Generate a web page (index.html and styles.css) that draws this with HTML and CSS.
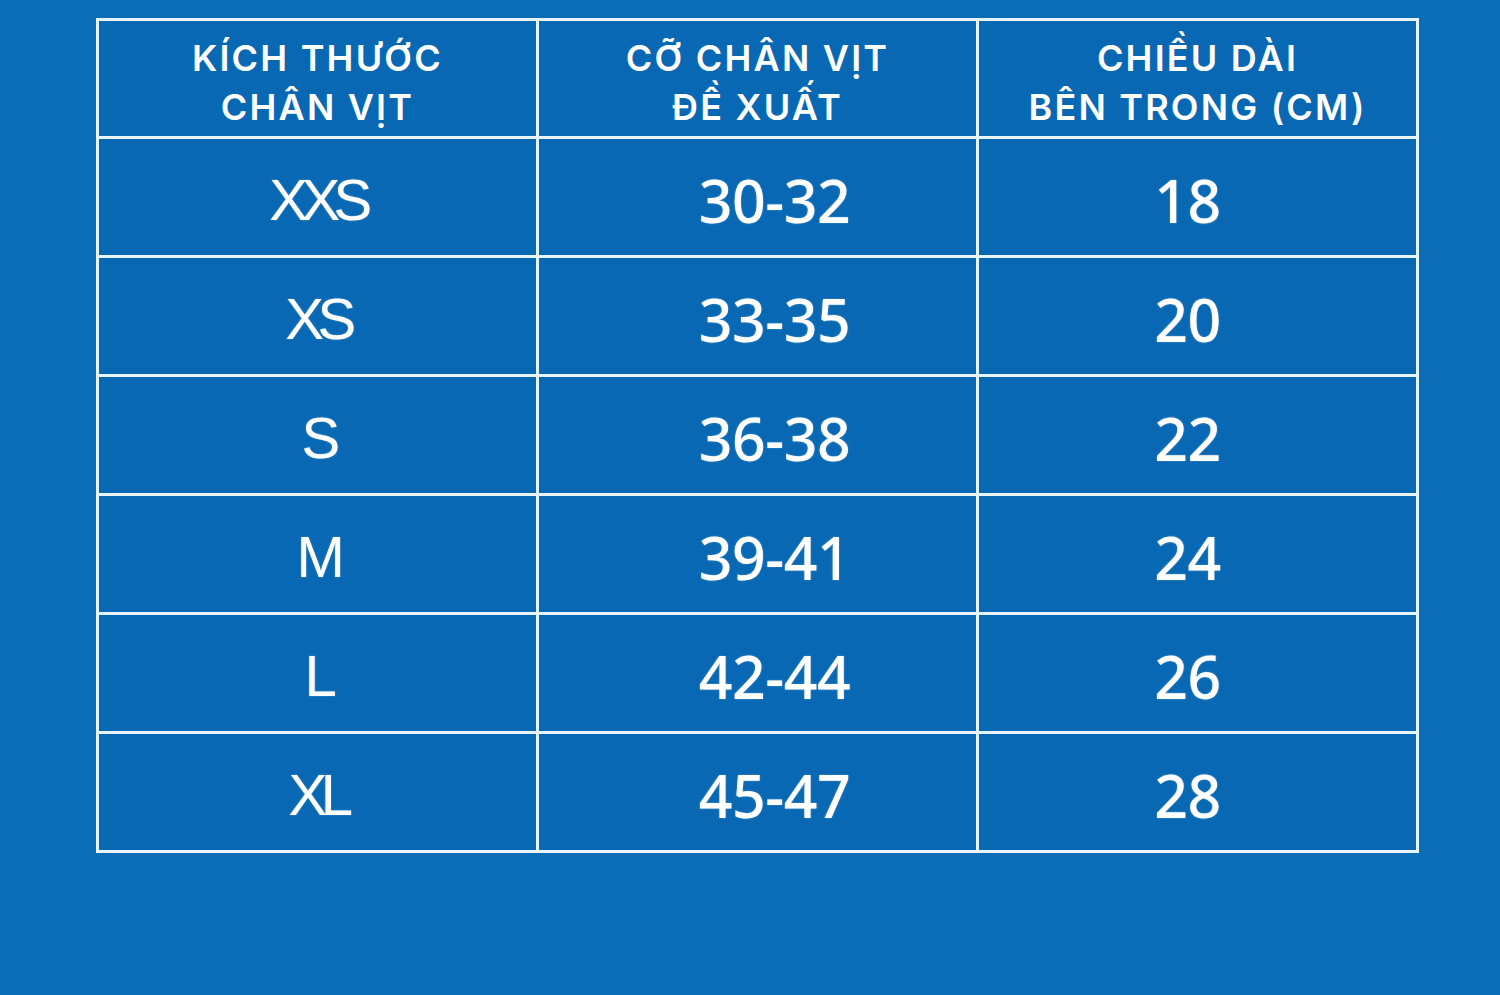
FILE: index.html
```html
<!DOCTYPE html>
<html lang="vi">
<head>
<meta charset="utf-8">
<title>Bảng kích thước chân vịt</title>
<link rel="stylesheet" href="styles.css">
</head>
<body>
<main class="page">
  <table class="size-table">
    <colgroup>
      <col class="c1"><col class="c2"><col class="c3">
    </colgroup>
    <thead>
      <tr>
        <th class="h1">KÍCH THƯỚC<br>CHÂN VỊT</th>
        <th class="h2">CỠ CHÂN VỊT<br>ĐỀ XUẤT</th>
        <th class="h3">CHIỀU DÀI<br>BÊN TRONG (CM)</th>
      </tr>
    </thead>
    <tbody>
      <tr><td class="size">XXS</td><td class="num mid">30-32</td><td class="num last">18</td></tr>
      <tr><td class="size">XS</td><td class="num mid">33-35</td><td class="num last">20</td></tr>
      <tr><td class="size">S</td><td class="num mid">36-38</td><td class="num last">22</td></tr>
      <tr><td class="size">M</td><td class="num mid">39-41</td><td class="num last">24</td></tr>
      <tr><td class="size">L</td><td class="num mid">42-44</td><td class="num last">26</td></tr>
      <tr><td class="size">XL</td><td class="num mid">45-47</td><td class="num last">28</td></tr>
    </tbody>
  </table>
</main>
</body>
</html>
```

FILE: styles.css
```css
html, body {
  margin: 0;
  padding: 0;
  background: #0a6db6;
}

.page {
  width: 1500px;
  height: 995px;
  padding: 18px 0 0 96px;
  box-sizing: border-box;
}

.size-table {
  border-collapse: collapse;
  table-layout: fixed;
  width: 1320px;
  border: 3px solid #e6f5fc;
  color: #ffffff;
}

.c1 { width: 440px; }
.c2 { width: 440px; }
.c3 { width: 440px; }

.size-table th,
.size-table td {
  border: 3px solid #e6f5fc;
  text-align: center;
  vertical-align: middle;
  padding: 0;
  background: #0868b3;
}

.size-table th {
  height: 118px;
  font-family: "Inter", "Open Sans", sans-serif;
  font-weight: 600;
  font-size: 36px;
  line-height: 49px;
  letter-spacing: 2.2px;
  padding-top: 8px;
  box-sizing: border-box;
}

.size-table td {
  height: 119px;
  padding-top: 5px;
  box-sizing: border-box;
}

.size-table td.size {
  font-family: "Liberation Sans", Arial, sans-serif;
  font-size: 58px;
  letter-spacing: -6.5px;
  padding-left: 0;
  text-shadow: 0 0 2px rgba(255,255,255,0.35);
}

.size-table td.num {
  font-family: "Noto Sans", "Open Sans", sans-serif;
  font-weight: 500;
  font-size: 59px;
  letter-spacing: -0.5px;
  text-shadow: 0 0 2px rgba(255,255,255,0.35);
}

.size-table td.mid { padding-left: 34px; }
.size-table td.last { padding-right: 20px; }
```
